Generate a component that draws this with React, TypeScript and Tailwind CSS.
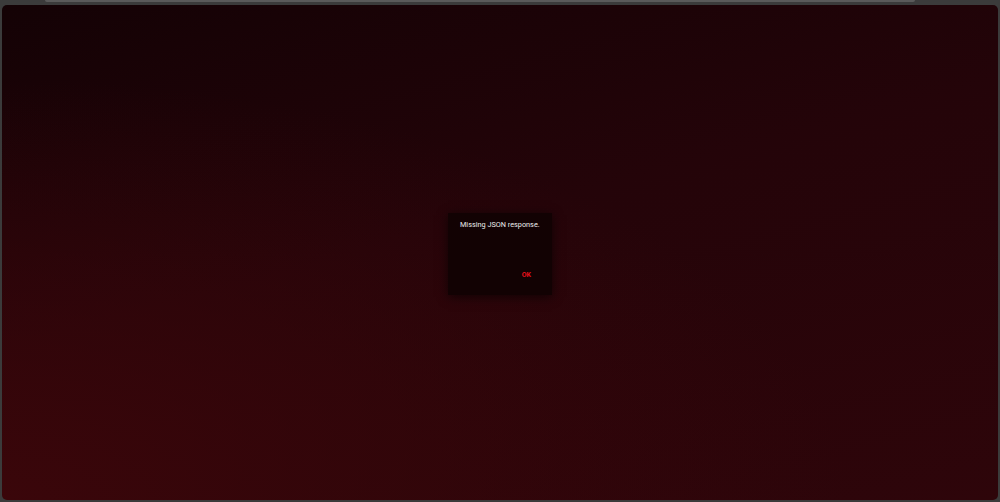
export default function App() {
  return (
    <div className="w-[1000px] h-[502px] bg-[#3b3b3b] flex flex-col overflow-hidden font-['Roboto',Arial,sans-serif]">
      <div className="h-[5px] flex shrink-0">
        <div className="ml-[45px] w-[870px] h-[2px] bg-[#5a5a5a] rounded-b-sm" />
      </div>
      <div className="mx-[2px] mb-[2px] flex-1 rounded-[5px] flex items-center justify-center bg-[radial-gradient(ellipse_at_0%_100%,#3a060a_0%,rgba(58,6,10,0)_60%),linear-gradient(165deg,#140205_0%,#240409_45%,#2e050a_100%)]">
        <div className="w-[104px] h-[82px] bg-[#120203] shadow-[0_2px_10px_rgba(0,0,0,0.6)] flex flex-col pl-[12px] pr-[8px] pt-[6px] pb-[15px] mt-[2px]">
          <p className="text-[7.3px] leading-[12px] text-[#ededed] whitespace-nowrap">Missing JSON response.</p>
          <div className="mt-auto flex justify-end pr-[13px]">
            <span className="text-[7px] leading-[10px] font-bold text-[#e3101a]">OK</span>
          </div>
        </div>
      </div>
    </div>
  );
}
